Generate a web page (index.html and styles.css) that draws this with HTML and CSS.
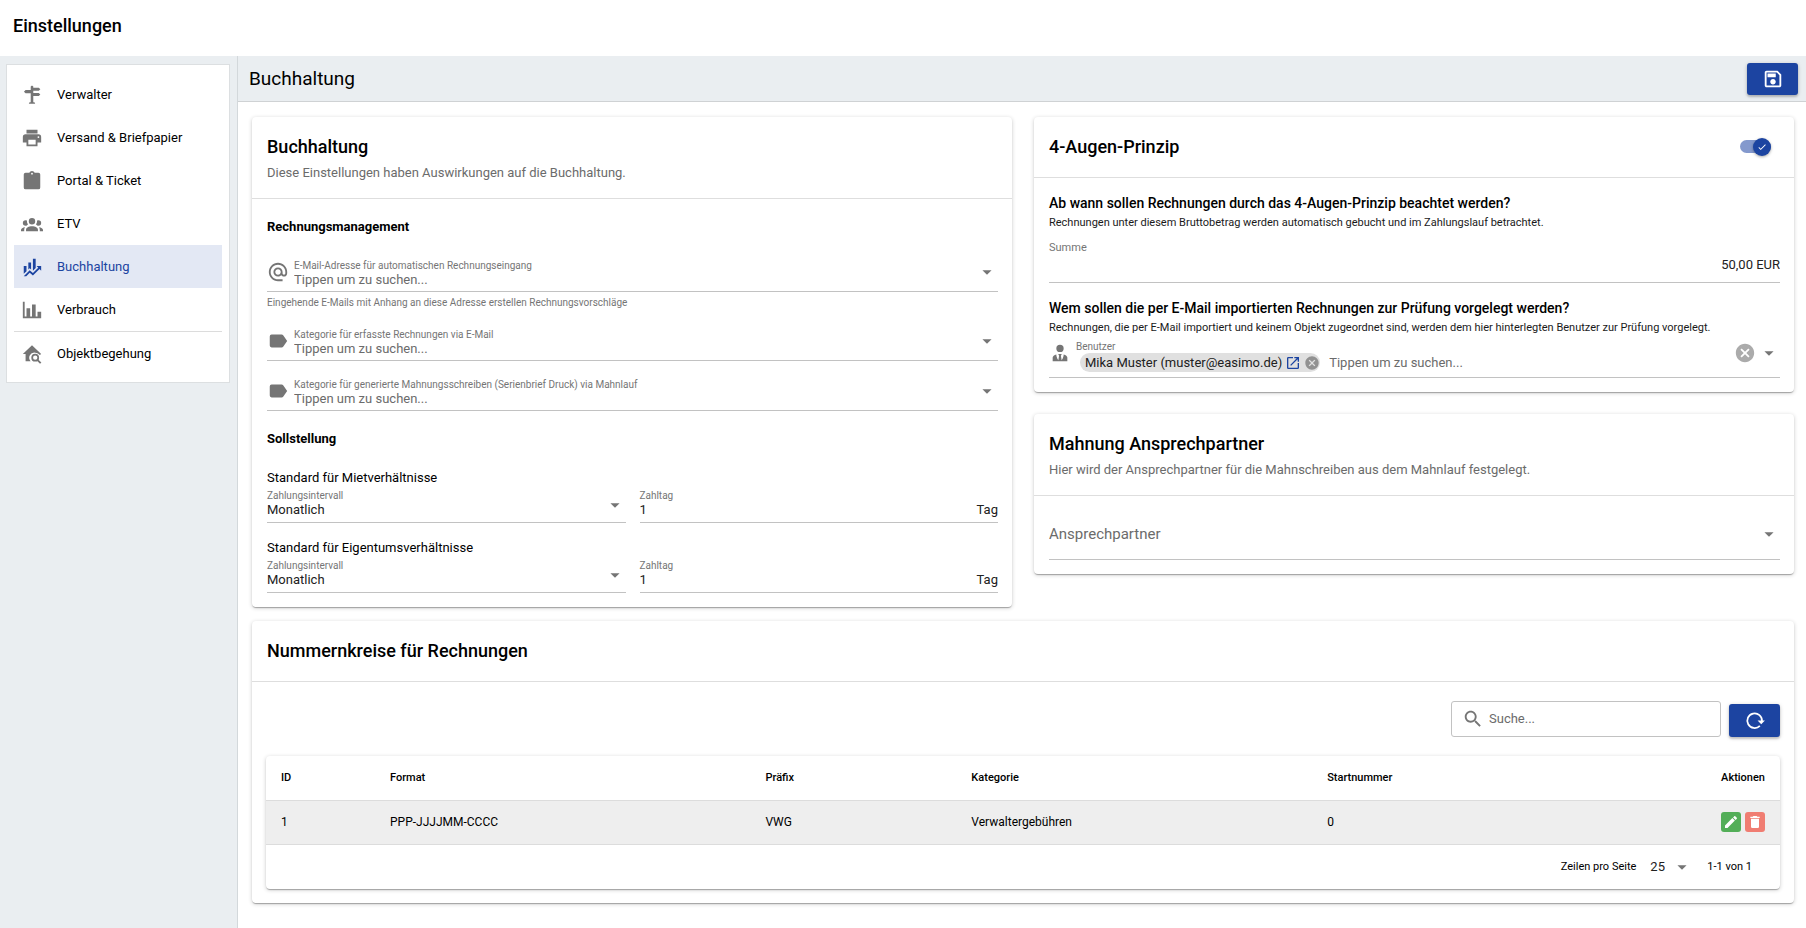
FILE: index.html
```html
<!DOCTYPE html>
<html lang="de">
<head>
<meta charset="utf-8">
<title>Einstellungen</title>
<link rel="stylesheet" href="styles.css">
</head>
<body>
<svg class="sprite" aria-hidden="true">
  <symbol id="i-sign" viewBox="0 0 24 24"><path d="M10.600 4V2.600L12 1.600l1.400 1V4h6l1.700 1.600L19.400 7.400h-6V9.800h6l1.700 1.700-1.700 1.700h-6V20h1.300l.8 1.600H8.500L9.300 20h1.300V10.200H5L3.200 8.400 5 6.600h5.600z"/></symbol>
  <symbol id="i-printer" viewBox="0 0 24 24"><path d="M18,3H6V7H18M19,12A1,1 0 0,1 18,11A1,1 0 0,1 19,10A1,1 0 0,1 20,11A1,1 0 0,1 19,12M16,19H8V14H16M19,8H5A3,3 0 0,0 2,11V17H6V21H18V17H22V11A3,3 0 0,0 19,8Z"/></symbol>
  <symbol id="i-clipboard" viewBox="0 0 24 24"><path d="M19,3H14.82C14.4,1.84 13.3,1 12,1C10.7,1 9.600,1.840 9.180,3H5A2,2 0 0,0 3,5V19A2,2 0 0,0 5,21H19A2,2 0 0,0 21,19V5A2,2 0 0,0 19,3M12,3A1,1 0 0,1 13,4A1,1 0 0,1 12,5A1,1 0 0,1 11,4A1,1 0 0,1 12,3"/></symbol>
  <symbol id="i-group" viewBox="0 0 24 24"><path d="M12,5.5A3.5,3.5 0 0,1 15.5,9A3.5,3.5 0 0,1 12,12.5A3.5,3.5 0 0,1 8.5,9A3.5,3.5 0 0,1 12,5.5M5,8C5.56,8 6.08,8.15 6.53,8.42C6.38,9.85 6.8,11.27 7.66,12.38C7.16,13.34 6.16,14 5,14A3,3 0 0,1 2,11A3,3 0 0,1 5,8M19,8A3,3 0 0,1 22,11A3,3 0 0,1 19,14C17.84,14 16.84,13.34 16.34,12.38C17.2,11.27 17.62,9.85 17.47,8.42C17.92,8.15 18.44,8 19,8M5.5,18.25C5.5,16.18 8.41,14.5 12,14.5C15.59,14.5 18.5,16.18 18.5,18.25V20H5.5V18.25M0,20V18.5C0,17.11 1.89,15.94 4.45,15.6C3.86,16.28 3.5,17.22 3.5,18.25V20H0M24,20H20.5V18.25C20.5,17.22 20.14,16.28 19.55,15.6C22.11,15.94 24,17.11 24,18.5V20Z"/></symbol>
  <symbol id="i-finance" viewBox="0 0 24 24"><path d="M6,16.5L3,19.44V11H6M11,14.66L9.43,13.32L8,14.64V7H11M16,13L13,16V3H16M18.81,12.81L17,11H22V16L20.21,14.21L13,21.36L9.53,18.34L5.75,22H3L9.47,15.66L13,18.64"/></symbol>
  <symbol id="i-chart" viewBox="0 0 24 24"><path d="M22,21H2V3H4V19H6V10H10V19H12V6H16V19H18V14H22V21Z"/></symbol>
  <symbol id="i-homesearch" viewBox="0 0 24 24"><path d="M12 2.500 2 12h3v8h5.500A5.700 5.700 0 0 1 15.500 10.500c2.200 0 4 1.100 5 2.700L22 12z"/><circle cx="15.500" cy="16" r="3.300" fill="none" stroke="currentColor" stroke-width="1.900"/><path d="m17.800 18.300 3.700 3.700" stroke="currentColor" stroke-width="2"/></symbol>
  <symbol id="i-at" viewBox="0 0 24 24"><path d="M12,15C12.81,15 13.5,14.7 14.11,14.11C14.7,13.5 15,12.81 15,12C15,11.19 14.7,10.5 14.11,9.89C13.5,9.3 12.81,9 12,9C11.19,9 10.5,9.3 9.89,9.89C9.3,10.5 9,11.19 9,12C9,12.81 9.3,13.5 9.89,14.11C10.5,14.7 11.19,15 12,15M12,2C14.75,2 17.1,3 19.05,4.95C21,6.9 22,9.25 22,12V13.45C22,14.45 21.65,15.3 21,16C20.3,16.67 19.5,17 18.5,17C17.3,17 16.31,16.5 15.56,15.5C14.56,16.5 13.38,17 12,17C10.63,17 9.45,16.5 8.46,15.54C7.5,14.55 7,13.38 7,12C7,10.63 7.5,9.45 8.46,8.46C9.45,7.5 10.63,7 12,7C13.38,7 14.55,7.5 15.54,8.46C16.5,9.45 17,10.63 17,12V13.45C17,13.86 17.16,14.22 17.46,14.53C17.76,14.84 18.11,15 18.5,15C18.92,15 19.27,14.84 19.57,14.53C19.87,14.22 20,13.86 20,13.45V12C20,9.81 19.23,7.93 17.65,6.35C16.07,4.77 14.19,4 12,4C9.81,4 7.93,4.77 6.35,6.35C4.77,7.93 4,9.81 4,12C4,14.19 4.77,16.07 6.35,17.65C7.93,19.23 9.81,20 12,20H17V22H12C9.25,22 6.9,21 4.95,19.05C3,17.1 2,14.75 2,12C2,9.25 3,6.9 4.95,4.95C6.9,3 9.25,2 12,2Z"/></symbol>
  <symbol id="i-label" viewBox="0 0 24 24"><path d="M17.63,5.84C17.27,5.33 16.67,5 16,5H5A2,2 0 0,0 3,7V17A2,2 0 0,0 5,19H16C16.67,19 17.27,18.66 17.63,18.15L22,12L17.63,5.84Z"/></symbol>
  <symbol id="i-tie" viewBox="0 0 24 24"><path d="M12,3A4,4 0 0,1 16,7A4,4 0 0,1 12,11A4,4 0 0,1 8,7A4,4 0 0,1 12,3M16,13.54C16,14.6 15.72,17.07 13.81,19.83L13,15L13.94,13.12C13.32,13.05 12.67,13 12,13C11.33,13 10.68,13.05 10.06,13.12L11,15L10.19,19.83C8.28,17.07 8,14.6 8,13.54C5.61,14.24 4,15.5 4,17V21H10L11.09,21H12.91L14,21H20V17C20,15.5 18.4,14.24 16,13.54Z"/></symbol>
  <symbol id="i-caret" viewBox="0 0 24 24"><path d="M7 10l5 5 5-5z"/></symbol>
  <symbol id="i-cancel" viewBox="0 0 24 24"><path d="M12 2C6.47 2 2 6.47 2 12s4.47 10 10 10 10-4.47 10-10S17.53 2 12 2zm5 13.59L15.59 17 12 13.41 8.41 17 7 15.59 10.59 12 7 8.41 8.41 7 12 10.59 15.59 7 17 8.41 13.41 12 17 15.59z"/></symbol>
  <symbol id="i-open" viewBox="0 0 24 24"><path d="M14,3V5H17.59L7.76,14.83L9.17,16.24L19,6.41V10H21V3M19,19H5V5H12V3H5C3.89,3 3,3.9 3,5V19A2,2 0 0,0 5,21H19A2,2 0 0,0 21,19V12H19V19Z"/></symbol>
  <symbol id="i-save" viewBox="0 0 24 24"><path d="M17 3H5C3.89 3 3 3.9 3 5V19C3 20.1 3.89 21 5 21H19C20.1 21 21 20.1 21 19V7L17 3M19 19H5V5H16.17L19 7.83V19M12 12C10.34 12 9 13.34 9 15S10.34 18 12 18 15 16.66 15 15 13.66 12 12 12M6 6H15V10H6V6Z"/></symbol>
  <symbol id="i-search" viewBox="0 0 24 24"><path d="M15.5 14h-.79l-.28-.27C15.41 12.59 16 11.11 16 9.5 16 5.91 13.09 3 9.500 3S3 5.910 3 9.500 5.910 16 9.500 16c1.610 0 3.090-.59 4.230-1.570l.27.28v.79l5 4.990L20.490 19l-4.990-5zm-6 0C7.010 14 5 11.990 5 9.500S7.010 5 9.500 5 14 7.010 14 9.500 11.990 14 9.500 14z"/></symbol>
  <symbol id="i-refresh" viewBox="0 0 24 24"><path d="M19.600 12.200A8 8 0 1 0 17.300 17.300" fill="none" stroke="currentColor" stroke-width="1.900"/><path d="M14.800 11.500h8l-4 4z"/></symbol>
  <symbol id="i-pencil" viewBox="0 0 24 24"><path d="M20.71,7.04C21.1,6.65 21.1,6 20.71,5.63L18.37,3.29C18,2.9 17.35,2.9 16.96,3.29L15.12,5.12L18.87,8.87M3,17.25V21H6.75L17.81,9.93L14.06,6.18L3,17.25Z"/></symbol>
  <symbol id="i-delete" viewBox="0 0 24 24"><path d="M19,4H15.5L14.5,3H9.5L8.5,4H5V6H19M6,19A2,2 0 0,0 8,21H16A2,2 0 0,0 18,19V7H6V19Z"/></symbol>
  <symbol id="i-check" viewBox="0 0 24 24"><path d="M21,7L9,19L3.5,13.5L4.91,12.09L9,16.17L19.59,5.59L21,7Z"/></symbol>
</svg>

<header class="topbar"><h1 class="topbar-title">Einstellungen</h1></header>

<div class="shell">
  <aside class="sidebar">
    <nav class="menu" aria-label="Einstellungen">
      <a class="menu-item" href="#verwalter"><svg class="icon"><use href="#i-sign"/></svg>Verwalter</a>
      <a class="menu-item" href="#versand"><svg class="icon"><use href="#i-printer"/></svg>Versand &amp; Briefpapier</a>
      <a class="menu-item" href="#portal"><svg class="icon"><use href="#i-clipboard"/></svg>Portal &amp; Ticket</a>
      <a class="menu-item" href="#etv"><svg class="icon"><use href="#i-group"/></svg>ETV</a>
      <a class="menu-item active" href="#buchhaltung" aria-current="page"><svg class="icon"><use href="#i-finance"/></svg>Buchhaltung</a>
      <a class="menu-item" href="#verbrauch"><svg class="icon"><use href="#i-chart"/></svg>Verbrauch</a>
      <hr class="menu-line">
      <a class="menu-item" href="#objektbegehung"><svg class="icon"><use href="#i-homesearch"/></svg>Objektbegehung</a>
    </nav>
  </aside>

  <main class="main">
    <div class="page-bar">
      <h2 class="page-title">Buchhaltung</h2>
      <button class="btn save" type="button" aria-label="Speichern"><svg class="icon"><use href="#i-save"/></svg></button>
    </div>

    <div class="content">
      <div class="columns">
        <section class="card">
          <div class="card-head">
            <h3 class="card-title">Buchhaltung</h3>
            <p class="card-sub">Diese Einstellungen haben Auswirkungen auf die Buchhaltung.</p>
          </div>
          <div class="card-body accounting">
            <h4 class="group-title">Rechnungsmanagement</h4>
            <div class="stack">
              <div>
                <div class="field">
                  <svg class="icon"><use href="#i-at"/></svg>
                  <div class="field-main">
                    <label class="label" for="mail">E-Mail-Adresse für automatischen Rechnungseingang</label>
                    <input class="input" id="mail" type="text" placeholder="Tippen um zu suchen...">
                  </div>
                  <svg class="icon caret"><use href="#i-caret"/></svg>
                </div>
                <p class="hint">Eingehende E-Mails mit Anhang an diese Adresse erstellen Rechnungsvorschläge</p>
              </div>
              <div class="field">
                <svg class="icon"><use href="#i-label"/></svg>
                <div class="field-main">
                  <label class="label" for="cat-mail">Kategorie für erfasste Rechnungen via E-Mail</label>
                  <input class="input" id="cat-mail" type="text" placeholder="Tippen um zu suchen...">
                </div>
                <svg class="icon caret"><use href="#i-caret"/></svg>
              </div>
              <div class="field">
                <svg class="icon"><use href="#i-label"/></svg>
                <div class="field-main">
                  <label class="label" for="cat-mahn">Kategorie für generierte Mahnungsschreiben (Serienbrief Druck) via Mahnlauf</label>
                  <input class="input" id="cat-mahn" type="text" placeholder="Tippen um zu suchen...">
                </div>
                <svg class="icon caret"><use href="#i-caret"/></svg>
              </div>
            </div>
            <h4 class="group-title second">Sollstellung</h4>
            <h5 class="sub-title">Standard für Mietverhältnisse</h5>
            <div class="pair">
              <div class="field compact">
                <div class="field-main">
                  <label class="label" for="int-miet">Zahlungsintervall</label>
                  <select class="input" id="int-miet"><option>Monatlich</option></select>
                </div>
                <svg class="icon caret"><use href="#i-caret"/></svg>
              </div>
              <div class="field compact">
                <div class="field-main">
                  <label class="label" for="tag-miet">Zahltag</label>
                  <div class="suffixed"><input class="input" id="tag-miet" type="text" value="1"><span>Tag</span></div>
                </div>
              </div>
            </div>
            <h5 class="sub-title spaced">Standard für Eigentumsverhältnisse</h5>
            <div class="pair">
              <div class="field compact">
                <div class="field-main">
                  <label class="label" for="int-eig">Zahlungsintervall</label>
                  <select class="input" id="int-eig"><option>Monatlich</option></select>
                </div>
                <svg class="icon caret"><use href="#i-caret"/></svg>
              </div>
              <div class="field compact">
                <div class="field-main">
                  <label class="label" for="tag-eig">Zahltag</label>
                  <div class="suffixed"><input class="input" id="tag-eig" type="text" value="1"><span>Tag</span></div>
                </div>
              </div>
            </div>
          </div>
        </section>

        <div class="right">
          <section class="card">
            <div class="card-head with-toggle">
              <h3 class="card-title" id="vier-augen">4-Augen-Prinzip</h3>
              <span class="toggle">
                <input class="toggle-input" type="checkbox" checked aria-labelledby="vier-augen">
                <span class="toggle-knob"><svg class="toggle-check"><use href="#i-check"/></svg></span>
              </span>
            </div>
            <div class="card-body questions">
              <h4 class="question">Ab wann sollen Rechnungen durch das 4-Augen-Prinzip beachtet werden?</h4>
              <p class="explain">Rechnungen unter diesem Bruttobetrag werden automatisch gebucht und im Zahlungslauf betrachtet.</p>
              <div class="amount">
                <label class="label amount-label" for="summe">Summe</label>
                <input class="input amount-input" id="summe" type="text" value="50,00 EUR">
              </div>
              <h4 class="question next">Wem sollen die per E-Mail importierten Rechnungen zur Prüfung vorgelegt werden?</h4>
              <p class="explain">Rechnungen, die per E-Mail importiert und keinem Objekt zugeordnet sind, werden dem hier hinterlegten Benutzer zur Prüfung vorgelegt.</p>
              <div class="field user">
                <svg class="icon"><use href="#i-tie"/></svg>
                <div class="field-main">
                  <label class="label" for="benutzer">Benutzer</label>
                  <div class="chips">
                    <span class="chip">Mika Muster (muster@easimo.de)
                      <a class="chip-link" href="#benutzer" aria-label="Benutzer öffnen"><svg class="icon-s"><use href="#i-open"/></svg></a>
                      <button class="bare chip-remove" type="button" aria-label="Entfernen"><svg class="icon-s"><use href="#i-cancel"/></svg></button>
                    </span>
                    <input class="input" id="benutzer" type="text" placeholder="Tippen um zu suchen...">
                  </div>
                </div>
                <button class="bare clear" type="button" aria-label="Leeren"><svg class="icon"><use href="#i-cancel"/></svg></button>
                <svg class="icon caret"><use href="#i-caret"/></svg>
              </div>
            </div>
          </section>

          <section class="card">
            <div class="card-head">
              <h3 class="card-title">Mahnung Ansprechpartner</h3>
              <p class="card-sub">Hier wird der Ansprechpartner für die Mahnschreiben aus dem Mahnlauf festgelegt.</p>
            </div>
            <div class="card-body">
              <div class="field tall">
                <input class="input large" type="text" placeholder="Ansprechpartner" aria-label="Ansprechpartner">
                <svg class="icon caret"><use href="#i-caret"/></svg>
              </div>
            </div>
          </section>
        </div>
      </div>

      <section class="card">
        <div class="card-head"><h3 class="card-title">Nummernkreise für Rechnungen</h3></div>
        <div class="card-body numbers">
          <div class="tools">
            <label class="search">
              <svg class="icon"><use href="#i-search"/></svg>
              <input class="input" type="search" placeholder="Suche..." aria-label="Suche">
            </label>
            <button class="btn" type="button" aria-label="Aktualisieren"><svg class="icon"><use href="#i-refresh"/></svg></button>
          </div>
          <div class="card table-card">
            <table class="table">
              <colgroup><col class="c-id"><col class="c-format"><col class="c-prefix"><col class="c-kat"><col></colgroup>
              <thead>
                <tr><th>ID</th><th>Format</th><th>Präfix</th><th>Kategorie</th><th>Startnummer</th><th class="end">Aktionen</th></tr>
              </thead>
              <tbody>
                <tr>
                  <td>1</td><td>PPP-JJJJMM-CCCC</td><td>VWG</td><td>Verwaltergebühren</td><td>0</td>
                  <td class="end">
                    <div class="actions">
                      <button class="mini edit" type="button" aria-label="Bearbeiten"><svg><use href="#i-pencil"/></svg></button>
                      <button class="mini remove" type="button" aria-label="Löschen"><svg><use href="#i-delete"/></svg></button>
                    </div>
                  </td>
                </tr>
              </tbody>
            </table>
            <div class="pager">
              <label for="rows">Zeilen pro Seite</label>
              <span class="rows"><select class="input" id="rows"><option>25</option></select><svg class="icon caret"><use href="#i-caret"/></svg></span>
              <span>1-1 von 1</span>
            </div>
          </div>
        </div>
      </section>
    </div>
  </main>
</div>
</body>
</html>
```
FILE: styles.css
```css
* { box-sizing: border-box; }

body {
  margin: 0;
  min-height: 100vh;
  display: flex;
  flex-direction: column;
  background: #fff;
  color: #000;
  font-family: Roboto, "Liberation Sans", sans-serif;
  font-size: 13px;
  line-height: 20px;
}

h1, h2, h3, h4, h5, p { margin: 0; }

.sprite { display: none; }

.icon {
  flex: none;
  width: 22px;
  height: 22px;
  fill: currentColor;
}

.icon-s {
  display: block;
  width: 16px;
  height: 16px;
  fill: currentColor;
}

/* Frame */
.topbar { height: 56px; padding: 16px 13px; }
.topbar-title { font-size: 18px; font-weight: 500; line-height: 20px; }

.shell { flex: 1; display: flex; }

.sidebar {
  flex: none;
  width: 238px;
  padding: 8px 7px 8px 6px;
  background: #eaeef1;
  border-right: 1px solid #d3d8db;
}

.menu {
  padding: 8px 7px 7px;
  background: #fff;
  border: 1px solid #dcdfe1;
}

.menu-item {
  display: flex;
  align-items: center;
  gap: 14px;
  height: 43px;
  padding: 0 7px;
  color: #000;
  text-decoration: none;
}

.menu-item .icon { color: #757575; }
.menu-item.active, .menu-item.active .icon { color: #1c44a1; }
.menu-item.active { background: #e3e8f4; }

.menu-line { margin: 0; border: 0; border-top: 1px solid #dcdcdc; }

.main { flex: 1; min-width: 0; }

.page-bar {
  display: flex;
  align-items: center;
  justify-content: space-between;
  height: 46px;
  padding: 0 8px 0 11px;
  background: #eaeef1;
  border-bottom: 1px solid #cfd2d4;
}

.page-title { font-size: 19px; font-weight: 400; line-height: 28px; }

.btn {
  display: flex;
  align-items: center;
  justify-content: center;
  width: 51px;
  height: 33px;
  padding: 0;
  border: 0;
  border-radius: 3px;
  background: #1c44a1;
  color: #fff;
  box-shadow: 0 1px 4px rgba(0, 0, 0, .2), 0 2px 2px rgba(0, 0, 0, .14);
}

.save { height: 32px; }

/* Cards */
.content {
  display: flex;
  flex-direction: column;
  gap: 14px;
  padding: 15px 12px 25px 14px;
}

.columns {
  display: grid;
  grid-template-columns: 1fr 1fr;
  align-items: start;
  gap: 22px;
}

.right { display: flex; flex-direction: column; gap: 22px; }

.card {
  background: #fff;
  border-radius: 4px;
  box-shadow: 0 1px 4px rgba(0, 0, 0, .2), 0 2px 1px -1px rgba(0, 0, 0, .16), 0 1px 1px rgba(0, 0, 0, .14);
}

.card-head { padding: 13px 14px 14px 15px; border-bottom: 1px solid #dedede; }
.card-title { font-size: 18px; font-weight: 500; line-height: 33px; }
.card-sub { padding-bottom: 1px; color: #6b6b6b; }
.card-body { padding: 14px 14px 14px 15px; }

.with-toggle {
  display: flex;
  align-items: center;
  justify-content: space-between;
  padding-right: 23px;
}

.toggle { position: relative; display: flex; align-items: center; width: 31px; height: 18px; }

.toggle-input {
  appearance: none;
  width: 31px;
  height: 13px;
  margin: 0;
  border-radius: 7px;
  background: #8499cd;
}

.toggle-knob {
  position: absolute;
  right: 0;
  display: grid;
  place-items: center;
  width: 18px;
  height: 18px;
  border-radius: 50%;
  background: #1c44a1;
  box-shadow: 0 1px 3px rgba(0, 0, 0, .35);
  pointer-events: none;
}

.toggle-check { width: 10px; height: 10px; fill: #fff; }

.accounting { padding-top: 18px; }
.group-title { font-size: 13px; font-weight: 700; line-height: 20px; }
.group-title.second { padding-top: 18px; }
.stack { display: flex; flex-direction: column; gap: 11px; padding-top: 16px; }
.sub-title { padding-top: 19px; font-size: 13px; font-weight: 400; line-height: 20px; }
.sub-title.spaced { padding-top: 15px; }
.pair { display: grid; grid-template-columns: 1fr 1fr; gap: 14px; }

/* Fields */
.field {
  display: flex;
  align-items: center;
  height: 39px;
  border-bottom: 1px solid #c2c2c2;
  color: #757575;
}

.field.compact { height: 35px; }
.field.tall { height: 50px; padding-bottom: 2px; }

.field-main {
  flex: 1;
  align-self: flex-end;
  display: flex;
  flex-direction: column;
  min-width: 0;
  padding-bottom: 3px;
}

.compact .field-main { padding-bottom: 4px; }

.field > .icon:first-child { margin-right: 5px; }

.label { color: #757575; font-size: 10px; line-height: 12px; }

.input {
  appearance: none;
  flex: 1;
  min-width: 0;
  width: 100%;
  margin: 0;
  padding: 0;
  border: 0;
  outline: 0;
  background: transparent;
  color: #212121;
  font: 13px/16px Roboto, "Liberation Sans", sans-serif;
}

.input::placeholder { color: #6b6b6b; opacity: 1; }
.input.large { font-size: 15px; }

.suffixed { display: flex; color: #212121; line-height: 16px; }

.hint { padding-top: 3px; color: #757575; font-size: 10px; line-height: 16px; }

.questions { padding-top: 15px; }
.question { font-size: 14px; font-weight: 500; line-height: 20px; }
.question.next { padding-top: 15px; }
.explain { color: #1a1a1a; font-size: 11px; line-height: 20px; }

.amount {
  display: flex;
  flex-direction: column;
  padding: 9px 0 8px;
  border-bottom: 1px solid #c2c2c2;
}

.amount-label { font-size: 11px; }
.amount-input { flex: none; height: 20px; text-align: right; }

.user { height: 40px; }
.user > .icon:first-child { align-self: flex-start; margin-top: 4px; }
.user > .caret, .user > .clear { align-self: flex-start; margin-top: 4px; }
.chips { display: flex; align-items: center; gap: 9px; padding: 0 0 2px 4px; }

.chip {
  display: flex;
  align-items: center;
  gap: 3px;
  height: 19px;
  padding: 0 0 0 5px;
  border-radius: 10px;
  background: #e0e0e0;
  color: #212121;
}

.chip-link { color: #1c44a1; }

.bare {
  display: flex;
  padding: 0;
  border: 0;
  background: none;
}

.chip-remove { color: #919191; }
.clear { color: #ababab; margin-right: 2px; }

/* Number ranges */
.numbers { padding-left: 14px; }
.tools { display: flex; align-items: flex-end; justify-content: flex-end; gap: 8px; padding: 5px 0 19px; }

.search {
  display: flex;
  align-items: center;
  gap: 5px;
  width: 270px;
  height: 36px;
  padding: 0 10px;
  border: 1px solid #c2c2c2;
  border-radius: 3px;
  color: #757575;
}

.table { width: 100%; border-collapse: collapse; table-layout: fixed; }
.c-id { width: 7.2%; }
.c-format { width: 24.8%; }
.c-prefix { width: 13.6%; }
.c-kat { width: 23.5%; }

.table th, .table td {
  height: 44px;
  padding: 0 15px;
  border-bottom: 1px solid #dcdcdc;
  text-align: left;
  font-size: 12px;
  font-weight: 400;
}

.table th { font-size: 11px; font-weight: 500; }
.table td { background: #eee; }
.table .end { text-align: right; }

.actions { display: flex; justify-content: flex-end; gap: 4px; }

.mini {
  display: grid;
  place-items: center;
  width: 20px;
  height: 20px;
  padding: 0;
  border: 0;
  border-radius: 3px;
  color: #fff;
}

.mini svg { width: 16px; height: 16px; fill: currentColor; }
.edit { background: #53ae58; }
.remove { background: #f07d72; }

.pager {
  display: flex;
  align-items: center;
  justify-content: flex-end;
  gap: 14px;
  height: 44px;
  padding-right: 28px;
  font-size: 11px;
}

.rows { display: flex; align-items: center; gap: 6px; color: #757575; }
.rows .input { width: 15px; flex: none; }
```
